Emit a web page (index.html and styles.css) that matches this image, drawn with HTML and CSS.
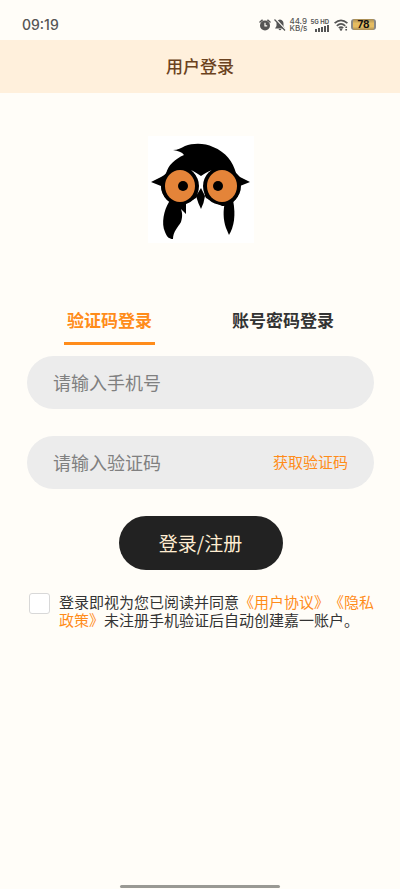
FILE: index.html
```html
<!DOCTYPE html>
<html lang="zh-CN">
<head>
<meta charset="UTF-8">
<meta name="viewport" content="width=device-width, initial-scale=1.0">
<title>用户登录</title>
<link rel="stylesheet" href="styles.css">
</head>
<body>
  <div class="status-bar">
    <span class="time">09:19</span>
    <div class="status-icons">
      <svg width="12" height="12" viewBox="0 0 12 12">
        <path d="M1 3 L3.200 1.200 M11 3 L8.800 1.200" stroke="#555" stroke-width="1.500" stroke-linecap="round"/>
        <circle cx="6" cy="6.500" r="5" fill="#555"/>
        <path d="M6 3.800 V6.800 H8.200" fill="none" stroke="#fffdf8" stroke-width="1.200"/>
      </svg>
      <svg width="12" height="12" viewBox="0 0 12 12">
        <path d="M6 0.500 C3.500 1 2.500 2.500 2.500 4.500 V7 L1 9.500 H11 L9.500 7 V4.500 C9.500 2.500 8.500 1 6 0.500 Z M4.500 10 H7.500 Q6 12.500 4.500 10 Z" fill="#555"/>
        <path d="M1.500 0 L12 11" stroke="#fffdf8" stroke-width="1.500"/>
        <path d="M0.500 0.500 L11 11.500" stroke="#555" stroke-width="1.200"/>
      </svg>
      <div class="speed"><span>44.9</span><span>KB/s</span></div>
      <div class="network">
        <span>5G HD</span>
        <svg width="14" height="7" viewBox="0 0 14 7" fill="#555">
          <rect x="0" y="4" width="2" height="3"/>
          <rect x="3" y="3" width="2" height="4"/>
          <rect x="6" y="2" width="2" height="5"/>
          <rect x="9" y="1" width="2" height="6"/>
          <rect x="12" y="0" width="2" height="7"/>
        </svg>
      </div>
      <svg width="14" height="12" viewBox="0 0 14 12" fill="none" stroke="#555" stroke-width="1.700">
        <path d="M0.600 4.200 Q7 -1.600 13.400 4.200"/>
        <path d="M2.800 6.800 Q7 3 11.200 6.800"/>
        <path d="M4.800 9 Q7 7.200 9.200 9"/>
        <circle cx="7" cy="10.500" r="1.200" fill="#555" stroke="none"/>
        <path d="M12.200 7.500 V11.500" stroke-dasharray="1.500 1"/>
      </svg>
      <span class="battery">78</span>
    </div>
  </div>

  <header class="header">
    <h1>用户登录</h1>
  </header>

  <main class="content">
    <svg class="logo" viewBox="0 0 106 107" role="img" aria-label="logo">
      <rect width="106" height="107" fill="#fff"/>
      <!-- head and ears -->
      <path d="M25 14 C30 14 33 12 37 10 C45 7 57 7 65 11 C78 16 85 26 88 37 L92 41 L102 46 L92 50 C92 60 86 70 74 70 L58 62 L53 52 L48 62 L34 70 C22 70 14 61 13 50 L3 46 L13 41 L18 38 C20 29 27 23 36 19 C34 16 30 15 25 14 Z"/>
      <path d="M43 34 C47 36 50 38 53 40 C56 38 59 36 64 34 C60 38 56 43 56 50 L57 61 L49 61 L50 50 C50 43 47 38 43 34 Z" fill="#fff"/>
      <!-- wings -->
      <path d="M21 66 C16 74 13 87 17 96 C19 101 21 103 25 103 C25 96 30 91 33 86 C35 80 34 76 33 73 L38 78 V68 L30 66 Z"/>
      <path d="M77 66 C75 75 75 83 78 92 L81 99 C86 91 88 79 85 64 Z"/>
      <!-- eyes -->
      <circle cx="32" cy="50" r="19"/>
      <circle cx="74" cy="50" r="19"/>
      <ellipse cx="32" cy="50" rx="15" ry="16" fill="#e48439"/>
      <ellipse cx="74" cy="50" rx="15" ry="16" fill="#e48439"/>
      <circle cx="35" cy="50" r="5"/>
      <circle cx="70" cy="50" r="5"/>
      <!-- beak -->
      <path d="M53 52 L57 60 Q56 67 53 73 Q50 67 48 60 Z"/>
    </svg>

    <form class="login-form" id="loginForm">
      <div class="tabs">
        <button type="button" class="tab active">验证码登录</button>
        <button type="button" class="tab">账号密码登录</button>
      </div>
      <div class="field">
        <input type="tel" id="phone" name="phone" placeholder="请输入手机号" aria-label="手机号">
      </div>
      <div class="field">
        <input type="text" id="code" name="code" placeholder="请输入验证码" aria-label="验证码">
        <button type="button" class="get-code">获取验证码</button>
      </div>
      <button type="submit" class="submit">登录/注册</button>
      <div class="agreement">
        <input type="checkbox" id="agree" name="agree">
        <label for="agree">登录即视为您已阅读并同意<a href="#">《用户协议》</a><a href="#">《隐私政策》</a>未注册手机验证后自动创建嘉一账户。</label>
      </div>
    </form>
  </main>

  <div class="home-bar"></div>

  <script>
    // Switch the active login tab
    let tabs = document.querySelectorAll(".tab");
    tabs.forEach(function(tab) {
      tab.addEventListener("click", function() {
        tabs.forEach(t => t.classList.remove("active"));
        tab.classList.add("active");
      });
    });

    document.getElementById("loginForm").addEventListener("submit", function(event) {
      event.preventDefault();
    });
  </script>
</body>
</html>
```
FILE: styles.css
```css
* {
  box-sizing: border-box;
}

body {
  display: flex;
  flex-direction: column;
  min-height: 100vh;
  margin: 0;
  background-color: #fffdf8;
  color: #333;
  font-family: "Noto Sans CJK SC", sans-serif;
  text-spacing-trim: space-all; /* Keep the full width of 》《 */
}

button,
input {
  padding: 0;
  border: none;
  background: none;
  color: inherit;
  font-family: inherit;
}

button {
  cursor: pointer;
}

/* Status bar */
.status-bar {
  display: flex;
  align-items: center;
  justify-content: space-between;
  height: 40px;
  padding: 9px 24px 0 22px;
  color: #555;
  font-family: Inter, sans-serif;
}

.time {
  font-size: 14px;
  font-weight: 500;
}

.status-icons {
  display: flex;
  align-items: center;
  gap: 3px;
}

.speed {
  display: flex;
  flex-direction: column;
  font-size: 8px;
  font-weight: 500;
  line-height: 7px;
}

.network {
  display: flex;
  flex-direction: column;
  align-items: flex-end;
  margin-right: 2px;
  font-size: 6px;
  font-weight: 700;
  line-height: 7px;
}

.battery {
  width: 25px;
  border-right: 2px solid #888;
  border-left: 2px solid #888;
  border-radius: 3px;
  background: linear-gradient(#a58a55, #e5bc62 40%, #e5bc62 70%, #a58a55);
  color: #111;
  font-size: 10px;
  font-weight: 700;
  line-height: 11px;
  text-align: center;
}

/* Title bar */
.header {
  display: flex;
  align-items: center;
  justify-content: center;
  height: 53px;
  padding-bottom: 2px;
  background-color: #fff0dc;
}

.header h1 {
  margin: 0;
  color: #6b4220;
  font-size: 17px;
  font-weight: 500;
}

.content {
  flex: 1;
  padding: 43px 26px 0 27px;
}

.logo {
  display: block;
  width: 106px;
  height: 107px;
  margin: 0 auto 60px;
}

/* Login form */
.login-form {
  display: flex;
  flex-direction: column;
}

.tabs {
  display: flex;
  justify-content: space-around;
  margin-bottom: 11px;
}

.tab {
  height: 42px;
  padding: 0 3px 6px;
  border-bottom: 3px solid transparent;
  font-size: 17px;
  font-weight: 700;
}

.tab.active {
  border-bottom-color: #ff8c1a;
  color: #ff8c1a;
}

.field {
  display: flex;
  align-items: center;
  height: 53px;
  margin-bottom: 27px;
  padding: 0 26px 2px;
  border-radius: 27px;
  background-color: #ececec;
}

.field input {
  flex: 1;
  min-width: 0;
  font-size: 18px;
  outline: none;
}

.field input::placeholder {
  color: #808080;
}

.get-code {
  color: #ff8c1a;
  font-size: 15px;
}

.submit {
  align-self: center;
  width: 164px;
  height: 54px;
  margin-bottom: 23px;
  padding-bottom: 2px;
  border-radius: 27px;
  background-color: #222;
  color: #ffedd2;
  font-size: 19px;
}

/* Agreement */
.agreement {
  display: flex;
  align-items: flex-start;
  gap: 9px;
  margin-right: -6px;
  padding-left: 2px;
}

.agreement input {
  appearance: none;
  flex: none;
  width: 21px;
  height: 21px;
  margin: 0;
  border: 1px solid #d8d8d8;
  border-radius: 3px;
  background-color: #fff;
}

.agreement input:checked {
  background-color: #ff8c1a;
}

.agreement label {
  font-size: 15px;
  line-height: 18px;
}

.agreement a {
  color: #ff8c1a;
  text-decoration: none;
}

.home-bar {
  width: 40%;
  height: 3px;
  margin: 0 auto 1px;
  border-radius: 2px;
  background-color: #999994;
}
```
